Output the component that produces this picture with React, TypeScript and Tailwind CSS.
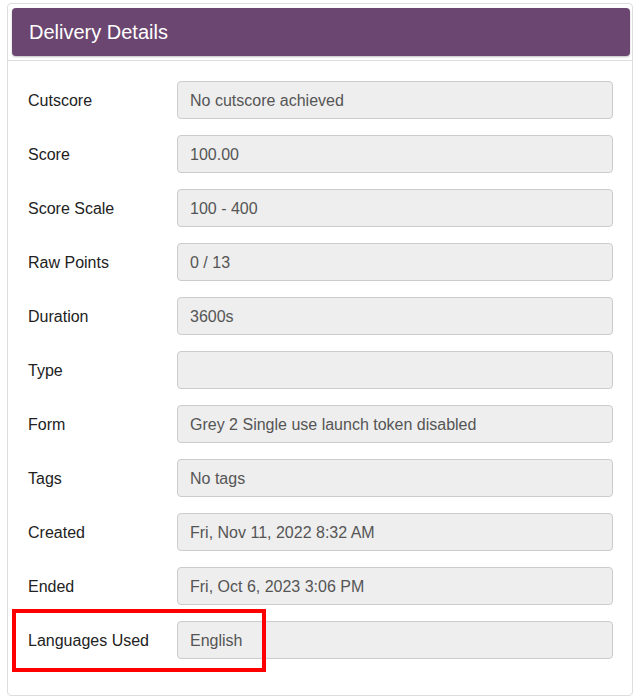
import React from "react";

const rows: [string, string][] = [
  ["Cutscore", "No cutscore achieved"],
  ["Score", "100.00"],
  ["Score Scale", "100 - 400"],
  ["Raw Points", "0 / 13"],
  ["Duration", "3600s"],
  ["Type", ""],
  ["Form", "Grey 2 Single use launch token disabled"],
  ["Tags", "No tags"],
  ["Created", "Fri, Nov 11, 2022 8:32 AM"],
  ["Ended", "Fri, Oct 6, 2023 3:06 PM"],
  ["Languages Used", "English"],
];

export default function App() {
  return (
    <div
      className="w-[638px] h-[697px] bg-white pt-[3px] pl-[7px]"
      style={{ fontFamily: '"Liberation Sans", Arial, sans-serif' }}
    >
      <div className="w-[626px] h-[693px] border border-[#dddddd] rounded-[4px] flex flex-col">
        <div className="pt-[4px] pl-[4px] pr-[2px] pb-[4px] border-b border-[#dddddd]">
          <div className="h-[48px] bg-[#6b4670] rounded-[4px] shadow-[0_1px_2px_rgba(0,0,0,0.25)] flex items-center pl-[17px] text-white text-[20px]">
            Delivery Details
          </div>
        </div>
        <div className="pt-[20px] pl-[20px] pr-[19px] flex flex-col gap-[16px]">
          {rows.map(([label, value]) => (
            <div key={label} className="relative flex items-center">
              <div className="w-[149px] pt-[2px] text-[16px] text-[#222222]">{label}</div>
              <div className="flex-1 h-[38px] bg-[#eeeeee] border border-[#cccccc] rounded-[4px] flex items-center px-[12px] pt-[2px] text-[16px] text-[#555555]">
                {value}
              </div>
              {label === "Languages Used" && (
                <div className="absolute left-[-16px] top-[-12px] w-[254px] h-[63px] border-[4px] border-[#ff0000]" />
              )}
            </div>
          ))}
        </div>
      </div>
    </div>
  );
}
